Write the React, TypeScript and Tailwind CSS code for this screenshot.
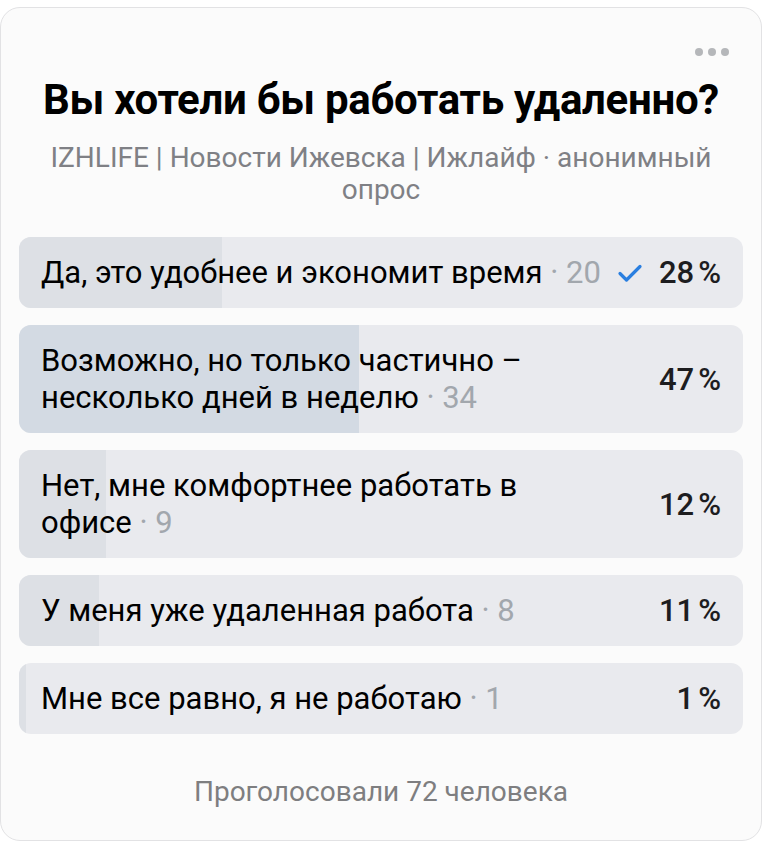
const options = [
  { id: 1, text: "Да, это удобнее и экономит время", votes: 20, percent: 28, mine: true },
  { id: 2, text: "Возможно, но только частично – несколько дней в неделю", votes: 34, percent: 47, lead: true },
  { id: 3, text: "Нет, мне комфортнее работать в офисе", votes: 9, percent: 12 },
  { id: 4, text: "У меня уже удаленная работа", votes: 8, percent: 11 },
  { id: 5, text: "Мне все равно, я не работаю", votes: 1, percent: 1 },
];

function Check() {
  return (
    <svg width="26" height="20" viewBox="0 0 26 20" fill="none" className="shrink-0">
      <path d="M3 10.5l6.5 6.5L23 3.5" stroke="#2a7fe0" strokeWidth="3.2" strokeLinecap="round" strokeLinejoin="round" />
    </svg>
  );
}

export default function App() {
  return (
    <div className="min-h-screen bg-white pt-[7px] font-['Roboto',sans-serif]">
      <div className="relative h-[834px] w-[762px] rounded-[20px] border border-[#e2e2e4] bg-[#fbfbfb] px-[18px]">
        {/* menu dots */}
        <div className="absolute right-[32px] top-[40px] flex gap-[5px]">
          <span className="h-[8px] w-[8px] rounded-full bg-[#b5b7ba]" />
          <span className="h-[8px] w-[8px] rounded-full bg-[#b5b7ba]" />
          <span className="h-[8px] w-[8px] rounded-full bg-[#b5b7ba]" />
        </div>

        <h1 className="pt-[68px] text-center text-[42px] font-bold leading-[48px] tracking-[-0.3px] text-black">
          Вы хотели бы работать удаленно?
        </h1>
        <p className="mx-auto mt-[18px] max-w-[700px] text-center text-[28px] leading-[32px] text-[#7f8085]">
          IZHLIFE | Новости Ижевска | Ижлайф · анонимный опрос
        </p>

        <div className="mt-[31px] flex flex-col gap-[17px]">
          {options.map((o) => (
            <div key={o.id} className="relative overflow-hidden rounded-[12px] bg-[#e9eaee]">
              <div
                className={o.lead ? "absolute inset-y-0 left-0 bg-[#d3dae3]" : "absolute inset-y-0 left-0 bg-[#dde0e5]"}
                style={{ width: `${o.percent}%` }}
              />
              <div className="relative flex items-center py-[17px] pl-[22px] pr-[22px]">
                <div className="max-w-[566px] shrink-0 text-[31px] leading-[37px] text-black">
                  {o.text}
                  <span className="text-[#a2a7ad]">{` · ${o.votes}`}</span>
                </div>
                {o.mine && (
                  <span className="ml-[16px]">
                    <Check />
                  </span>
                )}
                <div className="ml-auto shrink-0 text-[31px] font-medium leading-[37px] text-[#1d1d1f]">
                  {o.percent}
                  <span className="ml-[4px]">%</span>
                </div>
              </div>
            </div>
          ))}
        </div>

        <p className="mt-[42px] text-center text-[28px] leading-[32px] text-[#7e7e80]">
          Проголосовали 72 человека
        </p>
      </div>
    </div>
  );
}
